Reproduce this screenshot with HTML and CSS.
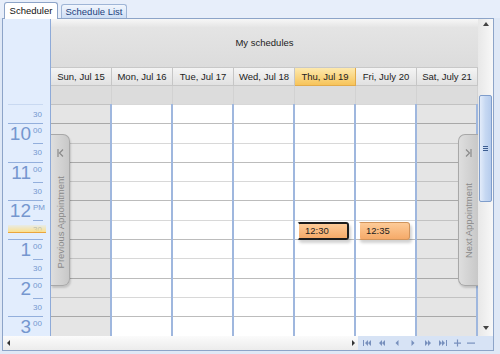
FILE: index.html
```html
<!doctype html>
<html lang="en">
<head>
    <meta charset="UTF-8">
    <title>Scheduler</title>
    <link rel="stylesheet" href="styles.css">
</head>
<body>
<div class="tabs">
    <div class="tab active">Scheduler</div>
    <div class="tab">Schedule List</div>
</div>

<div class="panel">
    <div class="main">
        <div class="ruler">
            <div class="ruler-head"></div>
            <div class="first"><span class="min">30</span></div>
            <div class="hour">
                <div class="num">10</div>
                <div class="mins"><div class="top">00</div><div class="bot">30</div></div>
            </div>
            <div class="hour">
                <div class="num">11</div>
                <div class="mins"><div class="top">00</div><div class="bot">30</div></div>
            </div>
            <div class="hour">
                <div class="num">12</div>
                <div class="mins"><div class="top">PM</div><div class="bot">30</div></div>
            </div>
            <div class="hour">
                <div class="num">1</div>
                <div class="mins"><div class="top">00</div><div class="bot">30</div></div>
            </div>
            <div class="hour">
                <div class="num">2</div>
                <div class="mins"><div class="top">00</div><div class="bot">30</div></div>
            </div>
            <div class="hour">
                <div class="num">3</div>
                <div class="mins"><div class="top">00</div></div>
            </div>
            <div class="now"></div>
        </div>

        <div class="view">
            <div class="group">My schedules</div>
            <div class="days">
                <div class="day-h">Sun, Jul 15</div>
                <div class="day-h">Mon, Jul 16</div>
                <div class="day-h">Tue, Jul 17</div>
                <div class="day-h">Wed, Jul 18</div>
                <div class="day-h today">Thu, Jul 19</div>
                <div class="day-h">Fri, July 20</div>
                <div class="day-h">Sat, July 21</div>
            </div>
            <div class="allday">
                <div></div><div></div><div></div><div></div><div></div><div></div><div></div>
            </div>
            <div class="grid">
                <div class="lines">
                    <div class="ln"></div><div class="ln hr"></div>
                    <div class="ln"></div><div class="ln hr"></div>
                    <div class="ln"></div><div class="ln hr"></div>
                    <div class="ln"></div><div class="ln hr"></div>
                    <div class="ln"></div><div class="ln hr"></div>
                    <div class="ln"></div><div class="ln hr"></div>
                </div>
                <div class="col off"></div>
                <div class="col"></div>
                <div class="col"></div>
                <div class="col"></div>
                <div class="col">
                    <div class="appt sel">12:30</div>
                </div>
                <div class="col">
                    <div class="appt">12:35</div>
                </div>
                <div class="col off"></div>

                <div class="jump prev">
                    <svg width="7" height="8" viewBox="0 0 7 8"><path d="M1 0v8M6 0.5L2.5 4L6 7.5" fill="none" stroke="#8a8a8a" stroke-width="1.2"/></svg>
                    <span>Previous Appointment</span>
                </div>
                <div class="jump next">
                    <svg width="7" height="8" viewBox="0 0 7 8"><path d="M6 0v8M1 0.5L4.5 4L1 7.5" fill="none" stroke="#8a8a8a" stroke-width="1.2"/></svg>
                    <span>Next Appointment</span>
                </div>
            </div>
        </div>

        <div class="vscroll">
            <div class="arrow up"></div>
            <div class="thumb"><i></i><i></i><i></i></div>
            <div class="fill"></div>
            <div class="arrow down"></div>
        </div>
    </div>

    <div class="hbar">
        <div class="hs">
            <div class="arrow left"></div>
            <div class="arrow right"></div>
        </div>
        <div class="nav">
            <svg width="15" height="8" viewBox="0 0 15 8"><path d="M3 1h1v6H3zM8 1v6L5 4zM11 1v6L8 4z"/></svg>
            <svg width="15" height="8" viewBox="0 0 15 8"><path d="M7 1v6L4 4zM10 1v6L7 4z"/></svg>
            <svg width="15" height="8" viewBox="0 0 15 8"><path d="M8.5 1v6L5.5 4z"/></svg>
            <svg width="15" height="8" viewBox="0 0 15 8"><path d="M6.5 1v6L9.5 4z"/></svg>
            <svg width="15" height="8" viewBox="0 0 15 8"><path d="M5 1v6L8 4zM8 1v6L11 4z"/></svg>
            <svg width="15" height="8" viewBox="0 0 15 8"><path d="M4 1v6L7 4zM7 1v6L10 4zM11 1h1v6h-1z"/></svg>
            <svg width="14" height="8" viewBox="0 0 14 8"><path d="M4 3.5h7v1.2H4zM6.9 0.5h1.2v7H6.9z"/></svg>
            <svg width="14" height="8" viewBox="0 0 14 8"><path d="M3 3.5h8v1.2H3z"/></svg>
        </div>
    </div>
</div>
</body>
</html>
```

FILE: styles.css
```css
body {
    margin: 0;
    width: 500px;
    height: 354px;
    overflow: hidden;
    background: #dfe8f6;
    font-family: "Liberation Sans", Arial, sans-serif;
    font-size: 9.5px;
    color: #222;
}
.tabs {
    display: flex;
    align-items: flex-end;
    gap: 3px;
    height: 18px;
    padding-left: 4px;
    background: #e7eefa;
}
.tab {
    box-sizing: border-box;
    width: 66px;
    height: 14px;
    line-height: 13px;
    text-align: center;
    border: 1px solid #9fb5d6;
    border-bottom: none;
    border-radius: 3px 3px 0 0;
    background: linear-gradient(#f2f6fd, #cddef5);
    color: #1c3f7c;
}
.tab.active {
    width: 54px;
    height: 17px;
    line-height: 15px;
    margin-bottom: -1px;
    position: relative;
    background: #fff;
    color: #111;
    border-color: #8da4c8;
}
.panel {
    box-sizing: border-box;
    height: 333px;
    margin: 0 6px 0 2px;
    border: 1px solid #8da4c8;
    background: #fff;
}
.main {
    display: flex;
    height: 317px;
}

/* time ruler */
.ruler {
    position: relative;
    width: 47px;
    border-right: 1px solid #8eaad8;
    background: #e2edfd;
    overflow: hidden;
    color: #7597cf;
}
.ruler-head {
    height: 85px;
}
.first {
    box-sizing: border-box;
    height: 19.3px;
    margin: 0 7px 0 5px;
    border-top: 1px solid #c9d9f1;
    padding: 5px 0 0 25px;
    font-size: 8px;
}
.hour {
    box-sizing: border-box;
    display: flex;
    height: 38.6px;
    margin: 0 7px 0 5px;
    border-top: 1px solid #93afdc;
}
.num {
    flex: 1;
    text-align: right;
    padding-right: 2px;
    font-size: 19px;
    line-height: 20px;
}
.mins {
    width: 10px;
    font-size: 8px;
}
.mins .top {
    height: 19px;
    padding-top: 2px;
    box-sizing: border-box;
    line-height: 9px;
}
.mins .bot {
    border-top: 1px solid #93afdc;
    padding-top: 4px;
    line-height: 9px;
}
.now {
    position: absolute;
    top: 206px;
    left: 5px;
    width: 38px;
    height: 7px;
    background: linear-gradient(rgba(251, 229, 150, 0.2), #fbe08e);
    border-bottom: 1px solid #eaa53d;
}

/* day view */
.view {
    display: flex;
    flex-direction: column;
    width: 427px;
}
.group {
    box-sizing: border-box;
    height: 49px;
    line-height: 48px;
    text-align: center;
    border-bottom: 1px solid #c8c8c8;
    background: linear-gradient(#f7f7f7, #e4e4e4 18%, #dcdcdc);
}
.days, .allday, .grid {
    display: grid;
    grid-template-columns: repeat(7, 61px);
}
.days {
    height: 18px;
}
.day-h {
    box-sizing: border-box;
    line-height: 17px;
    text-align: center;
    border-right: 1px solid #c6c6c6;
    border-bottom: 1px solid #c6c6c6;
    background: linear-gradient(#f4f4f4, #e1e1e1);
    color: #222;
}
.day-h.today {
    background: linear-gradient(#fde9ae, #f7c45a);
    border-color: #e2ab4b;
}
.allday {
    height: 18px;
    background: #dcdcdc;
}
.allday div {
    border-right: 1px solid #d2d2d2;
}
.grid {
    position: relative;
    flex: 1;
    overflow: hidden;
    background: #fff;
}
.lines {
    position: absolute;
    top: 0;
    left: 0;
    right: 0;
    display: flex;
    flex-direction: column;
}
.ln {
    box-sizing: border-box;
    height: 19.3px;
    flex-shrink: 0;
    border-top: 1px solid #d8d8d8;
}
.ln.hr {
    border-top-color: #bcbcbc;
}
.col {
    position: relative;
    box-sizing: border-box;
    border-right: 2px solid #9fb7de;
}
.col.off {
    background: rgba(0, 0, 0, 0.1);
}
.col:last-of-type {
    border-right: none;
}
.appt {
    position: absolute;
    top: 118px;
    left: 2px;
    box-sizing: border-box;
    width: 52px;
    height: 18px;
    padding-left: 6px;
    line-height: 16px;
    border: 1px solid #d0945c;
    border-left: 2px solid #fff;
    border-radius: 3px;
    background: linear-gradient(#fdcb98, #f5aa69);
    box-shadow: 2px 3px 3px rgba(0, 0, 0, 0.18);
    color: #1d1d1d;
}
.appt.sel {
    border: 2px solid #1c1c1c;
    border-left: 2px solid #fff;
    line-height: 14px;
}
.jump {
    position: absolute;
    top: 30px;
    box-sizing: border-box;
    height: 152px;
    display: flex;
    flex-direction: column;
    align-items: center;
    padding-top: 14px;
    border: 1px solid #a8a8a8;
    background: linear-gradient(to right, #dedede, #c8c8c8);
    box-shadow: 1px 2px 2px rgba(0, 0, 0, 0.15);
    color: #8a8a8a;
}
.jump span {
    writing-mode: vertical-rl;
    transform: rotate(180deg);
    white-space: nowrap;
}
.prev {
    left: 0;
    width: 19px;
    border-left: none;
    border-radius: 0 7px 7px 0;
}
.prev span {
    margin-top: 19px;
}
.next {
    right: 0;
    width: 20px;
    border-right: none;
    border-radius: 7px 0 0 7px;
}
.next span {
    margin-top: 26px;
}

/* scrollbars */
.vscroll {
    width: 15px;
    display: flex;
    flex-direction: column;
    align-items: center;
    background: linear-gradient(to right, #e8e8e8, #f8f8f8);
}
.arrow {
    width: 0;
    height: 0;
    border: 3.5px solid transparent;
}
.arrow.up {
    margin-top: 3px;
    border-bottom: 4px solid #444;
    border-top-width: 0;
}
.arrow.down {
    margin-bottom: 6px;
    border-top: 4px solid #444;
    border-bottom-width: 0;
}
.thumb {
    box-sizing: border-box;
    width: 13px;
    height: 107px;
    margin-top: 69px;
    display: flex;
    flex-direction: column;
    align-items: center;
    justify-content: center;
    gap: 1px;
    border: 1px solid #7f9dcb;
    border-radius: 2px;
    background: linear-gradient(to right, #e3ecfa, #c6d8f2 50%, #b6cced);
}
.thumb i {
    width: 5px;
    height: 1px;
    background: #3c5d92;
}
.fill {
    flex: 1;
}
.hbar {
    display: flex;
    height: 14px;
}
.hs {
    flex: 1;
    display: flex;
    align-items: center;
    justify-content: space-between;
    padding: 0 3px 0 4px;
    background: linear-gradient(#fbfbfb, #ececec);
}
.arrow.left {
    border-right: 3px solid #333;
    border-left-width: 0;
}
.arrow.right {
    border-left: 3px solid #333;
    border-right-width: 0;
}
.nav {
    display: flex;
    align-items: center;
    width: 133px;
    padding-left: 2px;
    background: #d7e3f5;
    fill: #7890bd;
}
```
